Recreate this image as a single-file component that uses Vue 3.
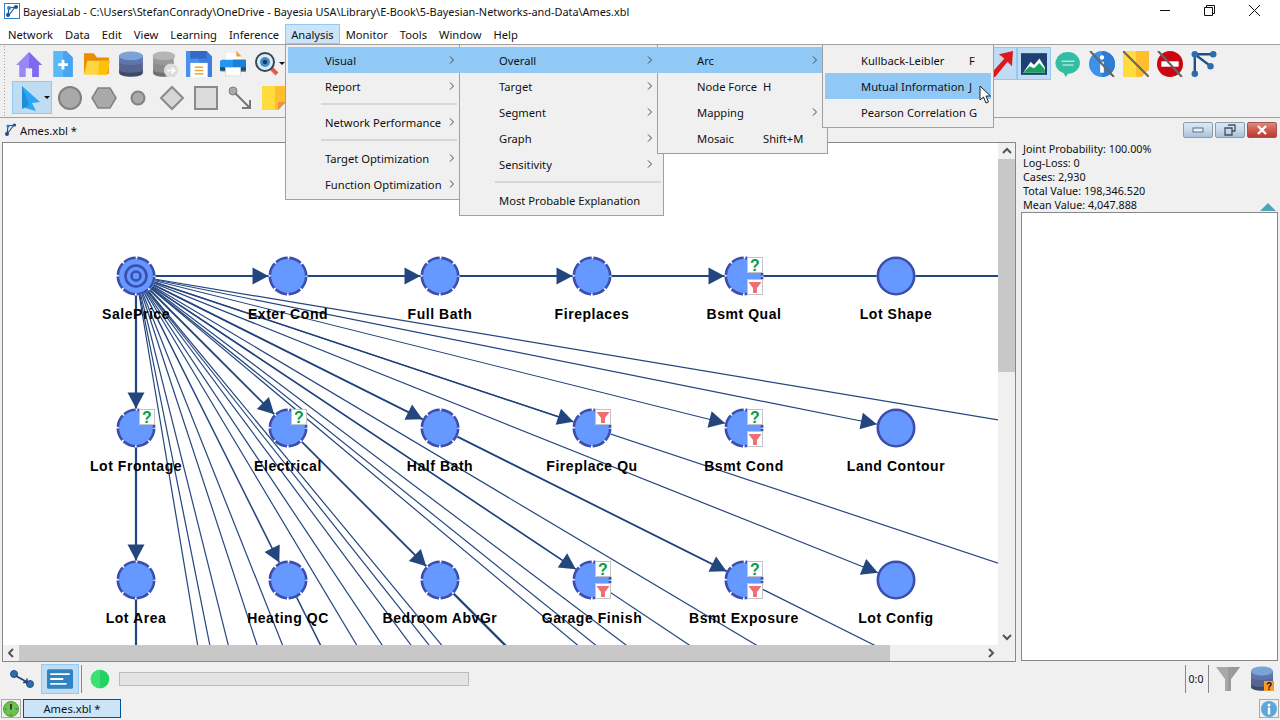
<template>
  <div class="app">
    <!-- title bar -->
    <header class="titlebar">
      <svg class="logo" width="16" height="16" viewBox="0 0 16 16">
        <rect x="0.5" y="0.5" width="15" height="15" fill="#fff" stroke="#2f7fd6" />
        <path d="M4 12 L5 5 M5 5 L11 4 M5 12 L11 4" stroke="#1e4f8a" stroke-width="1.2" fill="none" />
        <circle cx="4" cy="12" r="2" fill="#1e4f8a" />
        <circle cx="5" cy="5" r="2" fill="#2f7fd6" />
        <circle cx="12" cy="4" r="2" fill="#1e4f8a" />
      </svg>
      <span class="title-text">BayesiaLab - C:\Users\StefanConrady\OneDrive - Bayesia USA\Library\E-Book\5-Bayesian-Networks-and-Data\Ames.xbl</span>
      <div class="winctl">
        <svg width="44" height="22" viewBox="0 0 44 22"><path d="M17 10.5 H27" stroke="#111" /></svg>
        <svg width="44" height="22" viewBox="0 0 44 22"><path d="M17.5 7.5 H25.5 V15.5 H17.5 Z M19.5 7.5 V5.5 H27.5 V13.5 H25.5" stroke="#111" fill="none" /></svg>
        <svg width="46" height="22" viewBox="0 0 46 22"><path d="M18 5 L29 16 M29 5 L18 16" stroke="#111" fill="none" /></svg>
      </div>
    </header>

    <!-- menu bar -->
    <nav class="menubar">
      <span v-for="m in menuBar" :key="m" class="menubar-item" :class="{ active: m === 'Analysis' }">{{ m }}</span>
    </nav>

    <!-- toolbars -->
    <section class="toolbars">
      <div class="tool-row">
        <span class="tool"><svg width="26" height="26" viewBox="0 0 24 24"><path d="M12 1 L24 13 H21 V24 H15 V16 H9 V24 H3 V13 H0 Z" fill="#9a86f8" /><path d="M12 1 L24 13 H21 V24 H15 V16 H12 Z" fill="#7d6af0" /></svg></span>
        <span class="tool"><svg width="26" height="26" viewBox="0 0 24 24"><path d="M3 0 H15 L21 6 V24 H3 Z" fill="#5cb9f7" /><path d="M12 0 H15 L21 6 V24 H12 Z" fill="#4aa3ef" /><path d="M12 8 V17 M7.500 12.500 H16.500" stroke="#fff" stroke-width="2.600" /></svg></span>
        <span class="tool"><svg width="26" height="26" viewBox="0 0 24 24"><path d="M0 2 H9 L12 6 H23 V21 H0 Z" fill="#e98e04" /><path d="M3 9 H24 L21 22 H0 Z" fill="#ffd640" /><path d="M14 9 H24 L21 22 H13 Z" fill="#ffc107" /></svg></span>
        <span class="tool"><svg width="26" height="26" viewBox="0 0 24 24"><path d="M1 17 V20 C1 25 23 25 23 20 V17 Z" fill="#3f4a6b" /><path d="M1 10 V17 C1 21 23 21 23 17 V10 Z" fill="#56658f" /><path d="M1 4 V10 C1 14 23 14 23 10 V4 Z" fill="#5f76ad" /><ellipse cx="12" cy="4.500" rx="11" ry="4" fill="#7ba3d6" /></svg></span>
        <span class="tool"><svg width="26" height="26" viewBox="0 0 24 24"><path d="M1 17 V20 C1 25 20 25 20 20 V17 Z" fill="#6f6f6f" /><path d="M1 10 V17 C1 21 20 21 20 17 V10 Z" fill="#8c8c8c" /><path d="M1 4 V10 C1 14 20 14 20 10 V4 Z" fill="#999" /><ellipse cx="11" cy="4.500" rx="10.500" ry="4" fill="#b5b5b5" /><circle cx="17.500" cy="18" r="6.500" fill="#dcdcdc" /><path d="M14 18 H20 M18 15.500 L21 18 L18 20.500" stroke="#fff" stroke-width="1.600" fill="none" /></svg></span>
        <span class="tool"><svg width="26" height="26" viewBox="0 0 24 24"><path d="M0 0 H19 L24 5 V24 H0 Z" fill="#4a90f0" /><path d="M12 0 H19 L24 5 V24 H12 Z" fill="#3f7fe0" /><rect x="4" y="0" width="15" height="7" fill="#3567c4" /><rect x="4" y="11" width="16" height="13" fill="#fff" /><path d="M8 15 H16 M8 18 H16 M8 21 H16" stroke="#f5a623" stroke-width="1.500" /></svg></span>
        <span class="tool"><svg width="26" height="26" viewBox="0 0 24 24"><path d="M5 1 H16 L20 5 V10 H5 Z" fill="#fff" stroke="#ddd" stroke-width="0.500" /><path d="M15 0 L20 5 H15 Z" fill="#f0a030" /><rect x="0" y="8" width="24" height="11" rx="2" fill="#2196f3" /><rect x="12" y="8" width="12" height="11" fill="#1a7fd6" /><rect x="0" y="15" width="24" height="3" fill="#33475b" /><rect x="5" y="15" width="14" height="8" fill="#fff" stroke="#ccc" stroke-width="0.500" /></svg></span>
        <span class="tool tool-drop"><svg width="24" height="26" viewBox="0 0 24 24"><path d="M15 15 L22 22" stroke="#e8584f" stroke-width="4" /><circle cx="10" cy="10" r="9" fill="#dfe9ef" stroke="#33475b" stroke-width="2" /><circle cx="10" cy="10" r="5" fill="#3f8fd0" /><circle cx="10" cy="10" r="2.200" fill="#1f3a57" /></svg><i class="caret"></i></span>
        <span class="tool-gap"></span>
        <span class="tool tool-on tool-narrow"><svg width="26" height="26" viewBox="0 0 24 24"><path d="M1 24 L16 7 L11 3 L24 0 L23 14 L19 10 L5 27 Z" fill="#e0181c" /></svg></span>
        <span class="tool tool-on"><svg width="26" height="26" viewBox="0 0 24 24"><rect x="0" y="2" width="24" height="20" fill="#1d3f74" /><path d="M2 20 L9 10 L12 13 L17 7 L22 15 V20 Z" fill="#fff" /><path d="M2 20 L8 14 L12 16 L17 11 L22 17 V20 Z" fill="#18a25f" /></svg></span>
        <span class="tool"><svg width="26" height="26" viewBox="0 0 24 24"><path d="M12 1 A11 10 0 1 1 12 21 L10 24 L8 20.500 A11 10 0 0 1 12 1 Z" fill="#33bda2" /><path d="M6 9.500 H18 M7 13 H17" stroke="#a8e6d8" stroke-width="1.400" /></svg></span>
        <span class="tool"><svg width="26" height="26" viewBox="0 0 24 24"><circle cx="12" cy="12" r="12" fill="#3a92ec" /><path d="M12 0 A12 12 0 0 1 12 24 Z" fill="#2f7cd0" /><circle cx="12" cy="6" r="2" fill="#fff" /><rect x="10.300" y="10" width="3.400" height="10" fill="#fff" /><path d="M1 0 L23 24" stroke="#666" stroke-width="2" /></svg></span>
        <span class="tool"><svg width="26" height="26" viewBox="0 0 24 24"><path d="M0 0 H24 V17 L17 24 H0 Z" fill="#ffdb3d" /><path d="M12 0 H24 V17 L17 24 H12 Z" fill="#ffbe2e" /><path d="M0 0 L24 24" stroke="#666" stroke-width="2" /></svg></span>
        <span class="tool"><svg width="26" height="26" viewBox="0 0 24 24"><circle cx="12" cy="12" r="12" fill="#c90612" /><rect x="4" y="9.500" width="16" height="5" fill="#fff" /><path d="M1 0 L23 24" stroke="#666" stroke-width="2" /></svg></span>
        <span class="tool"><svg width="26" height="26" viewBox="0 0 24 24"><path d="M3.500 3 V21 M3.500 3 H20.500 M3.500 3 L18 14" stroke="#1f4e86" stroke-width="2.200" fill="none" /><circle cx="3.500" cy="3" r="3" fill="#2f6cae" /><circle cx="3.500" cy="21" r="3" fill="#2f6cae" /><circle cx="20.500" cy="3" r="3" fill="#2f6cae" /><circle cx="18" cy="14" r="3" fill="#2f6cae" /></svg></span>
      </div>
      <div class="tool-row">
        <span class="tool tool-on tool-wide"><svg width="22" height="26" viewBox="0 0 22 26"><path d="M3 1 L21 17 L13 18 L17 26 L3 22 Z" fill="#2aa6f2" /><path d="M3 1 L10 20 L3 24 Z" fill="#1c8edb" /></svg><i class="caret"></i></span>
        <span class="tool"><svg width="26" height="26" viewBox="0 0 26 26"><circle cx="13" cy="13" r="11" fill="#a9a9a9" stroke="#808080" stroke-width="2" /></svg></span>
        <span class="tool"><svg width="26" height="26" viewBox="0 0 26 26"><path d="M7 3 H19 L25 13 L19 23 H7 L1 13 Z" fill="#a9a9a9" stroke="#808080" stroke-width="1.500" /></svg></span>
        <span class="tool"><svg width="26" height="26" viewBox="0 0 26 26"><circle cx="13" cy="13" r="6.500" fill="#a9a9a9" stroke="#808080" stroke-width="2" /></svg></span>
        <span class="tool"><svg width="26" height="26" viewBox="0 0 26 26"><path d="M13 2 L24 13 L13 24 L2 13 Z" fill="#d6d6d6" stroke="#8a8a8a" stroke-width="2" /></svg></span>
        <span class="tool"><svg width="26" height="26" viewBox="0 0 26 26"><rect x="2" y="2" width="22" height="22" fill="#dcdcdc" stroke="#8a8a8a" stroke-width="2" /></svg></span>
        <span class="tool"><svg width="26" height="26" viewBox="0 0 26 26"><circle cx="6" cy="6" r="4" fill="#a9a9a9" stroke="#808080" /><path d="M8 8 L23 23 M23 15 V23 H15" stroke="#777" stroke-width="2" fill="none" /></svg></span>
        <span class="tool"><svg width="24" height="26" viewBox="0 0 24 24"><path d="M0 0 H24 V16 L16 24 H0 Z" fill="#ffdb3d" /><path d="M13 0 H24 V16 L16 24 H13 Z" fill="#ffbe2e" /><path d="M24 16 L16 24 V16 Z" fill="#e9963a" /></svg></span>
      </div>
    </section>

    <!-- document tab line -->
    <div class="docline">
      <svg width="13" height="14" viewBox="0 0 13 14">
        <path d="M3 11 L4 3 M4 3 L10 2 M3 11 L10 2" stroke="#1e4f8a" stroke-width="1.200" fill="none" />
        <circle cx="3" cy="11" r="2" fill="#1e4f8a" />
        <circle cx="4" cy="3" r="1.600" fill="#2f7fd6" />
        <circle cx="10.500" cy="2" r="1.600" fill="#1e4f8a" />
      </svg>
      <span class="doc-name">Ames.xbl *</span>
      <div class="doc-btns">
        <span class="doc-btn"><svg width="14" height="8" viewBox="0 0 14 8"><rect x="2" y="2" width="10" height="4" fill="#e8eef5" stroke="#5f6f80" /></svg></span>
        <span class="doc-btn"><svg width="14" height="12" viewBox="0 0 14 12"><path d="M5 1 H12 V7 H9 M2 4 H9 V11 H2 Z" fill="none" stroke="#44505e" stroke-width="1.300" /></svg></span>
        <span class="doc-btn doc-close"><svg width="14" height="12" viewBox="0 0 14 12"><path d="M3 2 L11 10 M11 2 L3 10" stroke="#fff" stroke-width="2.400" /></svg></span>
      </div>
    </div>

    <!-- work area -->
    <main class="work">
      <div class="canvas-frame">
        <div class="canvas-top">
          <svg class="graph" width="995" height="502" viewBox="3 143 995 502">
            <line v-for="(e, i) in edges" :key="'e' + i" :x1="e.x1" :y1="e.y1" :x2="e.x2" :y2="e.y2" :stroke-width="e.w" stroke="#24467f" />
            <polygon v-for="(a, i) in arrows" :key="'a' + i" :points="a" fill="#24467f" />
            <g v-for="n in nodes" :key="n.name">
              <circle :cx="n.x" :cy="n.y" r="19.500" fill="#fff" />
              <circle :cx="n.x" :cy="n.y" r="17.500" fill="#6699ff" />
              <circle :cx="n.x" :cy="n.y" r="18.200" fill="none" stroke="#3b4eae" stroke-width="2.600"
                :stroke-dasharray="n.solid ? null : '12.590 1.700'" stroke-dashoffset="-0.850" />
              <template v-if="n.target">
                <circle :cx="n.x" :cy="n.y" r="10.500" fill="none" stroke="#3b4eae" stroke-width="2.600" />
                <circle :cx="n.x" :cy="n.y" r="4.500" fill="none" stroke="#3b4eae" stroke-width="2.600" />
              </template>
              <g v-for="b in n.badges" :key="b.kind">
                <rect :x="n.x + 3.500" :y="n.y + b.dy + 0.500" width="15" height="15" fill="#fff" stroke="#c4c4c4" />
                <text v-if="b.kind === 'q'" class="qmark" :x="n.x + 11" :y="n.y + b.dy + 14">?</text>
                <template v-else>
                  <path :d="funnel(n.x + 4.500, n.y + b.dy + 3)" fill="#ec7074" />
                </template>
              </g>
              <text class="node-label" :x="n.x" :y="n.y + 43">{{ n.name }}</text>
            </g>
          </svg>
          <div class="vscroll">
            <svg width="16" height="16" viewBox="0 0 16 16"><path d="M4 10 L8 6 L12 10" stroke="#555" stroke-width="2" fill="none" /></svg>
            <div class="vthumb"></div>
            <div class="fill"></div>
            <svg width="16" height="16" viewBox="0 0 16 16"><path d="M4 6 L8 10 L12 6" stroke="#555" stroke-width="2" fill="none" /></svg>
          </div>
        </div>
        <div class="hscroll">
          <svg width="16" height="16" viewBox="0 0 16 16"><path d="M10 4 L6 8 L10 12" stroke="#555" stroke-width="2" fill="none" /></svg>
          <div class="hthumb"></div>
          <div class="fill"></div>
          <svg width="16" height="16" viewBox="0 0 16 16"><path d="M6 4 L10 8 L6 12" stroke="#555" stroke-width="2" fill="none" /></svg>
          <span class="corner"></span>
        </div>
      </div>
      <aside class="side">
        <div class="stats">
          <div v-for="s in stats" :key="s">{{ s }}</div>
          <i class="collapse"></i>
        </div>
        <div class="side-box"></div>
      </aside>
    </main>

    <!-- status row -->
    <div class="statusbar">
      <span class="st-btn"><svg width="26" height="22" viewBox="0 0 26 22"><circle cx="5" cy="6" r="3.500" fill="#2f6cae" stroke="#1f4e86" /><circle cx="21" cy="16" r="3.500" fill="#2f6cae" stroke="#1f4e86" /><path d="M7 8 L18 14 M18 10.500 V14.500 H14" stroke="#1f3f6e" stroke-width="1.500" fill="none" /></svg></span>
      <span class="st-btn st-on"><svg width="26" height="20" viewBox="0 0 24 18"><rect width="24" height="18" rx="1.500" fill="#2f85c4" /><path d="M3 4.500 H21 M3 9 H15 M3 13.500 H18" stroke="#fff" stroke-width="1.800" /></svg></span>
      <span class="st-sep"></span>
      <svg class="led" width="20" height="20" viewBox="0 0 20 20"><circle cx="10" cy="10" r="9.300" fill="#22d45f" /><path d="M10 .700 A9.300 9.300 0 0 0 10 19.300 Z" fill="#3ae274" /></svg>
      <div class="progress"></div>
      <span class="st-sep st-sep-a"></span>
      <span class="ratio">0:0</span>
      <span class="st-sep"></span>
      <svg class="st-funnel" width="26" height="26" viewBox="0 0 26 26"><path d="M1 1 H25 L16 13 V25 H10 V13 Z" fill="#a8a8a8" /><path d="M13 1 H25 L16 13 V25 H13 Z" fill="#9a9a9a" /></svg>
      <svg class="st-db" width="24" height="26" viewBox="0 0 24 26"><path d="M1 18 V21 C1 26 23 26 23 21 V18 Z" fill="#3f4a6b" /><path d="M1 11 V18 C1 22 23 22 23 18 V11 Z" fill="#56658f" /><path d="M1 5 V11 C1 15 23 15 23 11 V5 Z" fill="#5f76ad" /><ellipse cx="12" cy="5" rx="11" ry="4.500" fill="#7ba3d6" /><rect x="14" y="15" width="10" height="10" fill="#f79b2e" /><text class="db-q" x="19" y="24">?</text></svg>
    </div>

    <!-- task row -->
    <div class="taskbar">
      <span class="task-btn"><svg width="16" height="16" viewBox="0 0 16 16"><circle cx="8" cy="8" r="7.500" fill="#6cc24a" stroke="#4f9a35" /><path d="M8 3 V8.500" stroke="#222" stroke-width="1.600" /><path d="M8 13 V14.500 M2 8 H3.500 M12.500 8 H14" stroke="#2f6a1c" /></svg></span>
      <span class="task-tab">Ames.xbl *</span>
      <span class="task-btn task-info"><svg width="16" height="16" viewBox="0 0 16 16"><circle cx="8" cy="8" r="8" fill="#5ca5dd" /><circle cx="8" cy="4" r="1.500" fill="#fff" /><rect x="6.800" y="6.500" width="2.400" height="7" fill="#fff" /></svg></span>
    </div>

    <!-- open cascade of menus -->
    <div v-for="(menu, i) in menus" :key="i" class="menu" :class="menu.cls">
      <template v-for="(row, j) in menu.rows" :key="j">
        <div v-if="row === '-'" class="menu-sep"><span></span></div>
        <div v-else class="menu-row" :class="{ open: row.open, hot: row.hot }">
          <span class="menu-label">{{ row.t }}</span>
          <span v-if="row.k" class="menu-key">{{ row.k }}</span>
          <svg v-if="row.sub" class="menu-arrow" width="6" height="8" viewBox="0 0 6 8"><path d="M1 .500 L4.500 4 L1 7.500" stroke="#444" fill="none" /></svg>
        </div>
      </template>
    </div>

    <svg class="pointer" width="13" height="20" viewBox="0 0 13 20"><path d="M1 1 V15 L4.500 12 L7 18 L9.500 17 L7 11 H11.500 Z" fill="#fff" stroke="#222" /></svg>
  </div>
</template>

<script setup>
const menuBar = ['Network', 'Data', 'Edit', 'View', 'Learning', 'Inference', 'Analysis', 'Monitor', 'Tools', 'Window', 'Help']

const stats = [
  'Joint Probability: 100.00%',
  'Log-Loss: 0',
  'Cases: 2,930',
  'Total Value: 198,346.520',
  'Mean Value: 4,047.888',
]

const menus = [
  {
    cls: 'm1',
    rows: [
      { t: 'Visual', sub: true, open: true },
      { t: 'Report', sub: true },
      '-',
      { t: 'Network Performance', sub: true },
      '-',
      { t: 'Target Optimization', sub: true },
      { t: 'Function Optimization', sub: true },
    ],
  },
  {
    cls: 'm2',
    rows: [
      { t: 'Overall', sub: true, open: true },
      { t: 'Target', sub: true },
      { t: 'Segment', sub: true },
      { t: 'Graph', sub: true },
      { t: 'Sensitivity', sub: true },
      '-',
      { t: 'Most Probable Explanation' },
    ],
  },
  {
    cls: 'm3',
    rows: [
      { t: 'Arc', sub: true, open: true },
      { t: 'Node Force', k: 'H' },
      { t: 'Mapping', sub: true },
      { t: 'Mosaic', k: 'Shift+M' },
    ],
  },
  {
    cls: 'm4',
    rows: [
      { t: 'Kullback-Leibler', k: 'F' },
      { t: 'Mutual Information', k: 'J', hot: true },
      { t: 'Pearson Correlation', k: 'G' },
    ],
  },
]

const Q = { kind: 'q', dy: -19 }
const F = { kind: 'f', dy: 3 }
const FT = { kind: 'f', dy: -19 }

// col, row on the graph's grid
const grid = [
  ['SalePrice', 0, 0, { target: true }],
  ['Exter Cond', 1, 0],
  ['Full Bath', 2, 0],
  ['Fireplaces', 3, 0],
  ['Bsmt Qual', 4, 0, { badges: [Q, F] }],
  ['Lot Shape', 5, 0, { solid: true, noArrow: true }],
  ['Lot Frontage', 0, 1, { badges: [Q] }],
  ['Electrical', 1, 1, { badges: [Q] }],
  ['Half Bath', 2, 1],
  ['Fireplace Qu', 3, 1, { badges: [FT] }],
  ['Bsmt Cond', 4, 1, { badges: [Q, F] }],
  ['Land Contour', 5, 1, { solid: true }],
  ['Lot Area', 0, 2],
  ['Heating QC', 1, 2],
  ['Bedroom AbvGr', 2, 2],
  ['Garage Finish', 3, 2, { badges: [Q, F] }],
  ['Bsmt Exposure', 4, 2, { badges: [Q, F] }],
  ['Lot Config', 5, 2, { solid: true }],
]

const nodes = grid.map(([name, c, r, opts]) => ({
  name,
  x: 136 + c * 152,
  y: 276 + r * 152,
  badges: [],
  ...opts,
}))

const S = { x: 136, y: 276 }
const FAR = 1400

function ray(dx, dy, w) {
  return { x1: S.x, y1: S.y, x2: S.x + dx * FAR, y2: S.y + dy * FAR, w }
}

// from SalePrice out to a point on the grid (col, row)
function to(c, r, w) {
  return { x1: S.x, y1: S.y, x2: 136 + c * 152, y2: 276 + r * 152, w }
}

const edges = [
  // thin arcs leaving the canvas, by slope
  ray(1, 0, 2),
  ...[0.167, 0.333, 0.5, 0.595, 0.667, 0.753, 0.803, 0.836].map((m) => ray(1, m, 1.2)),
  ...[0.167, 0.2, 0.25, 0.328, 0.397, 0.598, 0.667, 0.745, 0.794, 0.828].map((r) => ray(r, 1, 1.2)),
  ray(0.5, 1, 1.5),
  ray(0, 1, 2.2),
  // thin arcs that stop at their node
  to(5, 1, 1.2),
  to(4, 1, 1.2),
  to(5, 2, 1.2),
  // heavier arcs
  to(4, 0, 2.2),
  to(3, 1, 1.5),
  to(4, 2, 1.7),
  to(3, 2, 1.5),
  to(2, 2, 1.8),
  { x1: 440, y1: 580, x2: 520, y2: 660, w: 2.4 },
]

function arrow(t) {
  const dx = t.x - S.x
  const dy = t.y - S.y
  const len = Math.hypot(dx, dy)
  const ux = dx / len
  const uy = dy / len
  const tipX = t.x - ux * 19.5
  const tipY = t.y - uy * 19.5
  const bx = tipX - ux * 16
  const by = tipY - uy * 16
  return [
    [tipX, tipY],
    [bx - uy * 8.5, by + ux * 8.5],
    [bx + uy * 8.5, by - ux * 8.5],
  ].map((p) => p.join(',')).join(' ')
}

const arrows = nodes.filter((n) => n.name !== 'SalePrice' && !n.noArrow).map(arrow)

function funnel(x, y) {
  return `M${x} ${y} H${x + 13} L${x + 8.5} ${y + 6} V${y + 11} H${x + 4.5} V${y + 6} Z`
}
</script>

<style scoped>
.app {
  position: relative;
  width: 1280px;
  height: 720px;
  overflow: hidden;
  display: flex;
  flex-direction: column;
  background: #f0f0f0;
  font-family: 'Noto Sans', 'Liberation Sans', sans-serif;
  font-size: 11.2px;
  color: #111;
}

.titlebar {
  height: 22px;
  background: #fff;
  display: flex;
  align-items: center;
  padding-left: 4px;
}

.logo {
  margin-right: 3px;
}

.title-text {
  font-size: 10.9px;
  white-space: nowrap;
}

.winctl {
  margin-left: auto;
  margin-right: 3px;
  display: flex;
  align-items: center;
}

.menubar {
  height: 22px;
  background: #fff;
  display: flex;
  align-items: flex-end;
  padding-left: 2px;
}

.menubar-item {
  height: 18px;
  line-height: 19px;
  padding: 0 5px;
  border: 1px solid transparent;
  box-sizing: content-box;
}

.menubar-item.active {
  background: #cce4f7;
  border-color: #90c8f6;
}

.toolbars {
  height: 74px;
  box-sizing: border-box;
  border-top: 1px solid #a0a0a0;
  border-bottom: 1px solid #a0a0a0;
  padding: 2px 0 0 12px;
  display: flex;
  flex-direction: column;
  gap: 1px;
  background-image: radial-gradient(#a8a8a8 0.6px, transparent 0.8px);
  background-size: 3px 3px;
  background-position: 3px 0;
  background-repeat: repeat-y;
}

.tool-row {
  display: flex;
  height: 33px;
}

.tool {
  width: 34px;
  height: 33px;
  display: flex;
  align-items: center;
  justify-content: center;
  position: relative;
  flex: none;
}

.tool-wide {
  width: 40px;
  margin-right: 1px;
  padding-right: 4px;
  box-sizing: border-box;
}

.tool-on {
  background: #c0dcf3;
  outline: 1px solid #90c8f6;
  outline-offset: -1px;
}

.tool-narrow {
  overflow: hidden;
}

.tool-gap {
  flex: none;
  width: 699px;
}

.caret {
  position: absolute;
  right: 2px;
  top: 15px;
  border-left: 3px solid transparent;
  border-right: 3px solid transparent;
  border-top: 3px solid #111;
}

.tool-drop .caret {
  right: -1px;
}

.docline {
  height: 24px;
  display: flex;
  align-items: center;
  padding-left: 4px;
  gap: 3px;
}

.doc-btns {
  margin-left: auto;
  margin-right: 3px;
  display: flex;
  gap: 2px;
}

.doc-btn {
  width: 30px;
  height: 16px;
  display: flex;
  align-items: center;
  justify-content: center;
  border: 1px solid #8b9db2;
  border-radius: 2px;
  box-sizing: border-box;
  background: linear-gradient(#dbe7f3, #c9d9ea 50%, #a9c0d8);
}

.doc-close {
  border-color: #a0564e;
  background: linear-gradient(#e08a7e, #cf5a4e 50%, #b53c32);
}

.work {
  height: 520px;
  display: flex;
  padding-left: 2px;
}

.canvas-frame {
  width: 1014px;
  height: 520px;
  box-sizing: border-box;
  border: 1px solid #888;
  display: flex;
  flex-direction: column;
  background: #fff;
}

.canvas-top {
  flex: 1;
  min-height: 0;
  display: flex;
}

.graph {
  display: block;
  flex: none;
  background: #fff;
}

.qmark {
  font-family: 'Liberation Sans', sans-serif;
  font-weight: 700;
  font-size: 16px;
  fill: #0a9b3f;
  text-anchor: middle;
}

.db-q {
  font-family: 'Liberation Sans', sans-serif;
  font-weight: 700;
  font-size: 10px;
  fill: #111;
  text-anchor: middle;
}

.node-label {
  font-family: 'Liberation Sans', sans-serif;
  font-weight: 700;
  font-size: 14px;
  letter-spacing: 0.55px;
  fill: #000;
  text-anchor: middle;
}

.vscroll {
  flex: 1;
  background: #f0f0f0;
  display: flex;
  flex-direction: column;
  align-items: center;
}

.vthumb {
  width: 100%;
  height: 213px;
  background: #c8c8c8;
  flex: none;
}

.fill {
  flex: 1;
}

.hscroll {
  height: 16px;
  flex: none;
  background: #f0f0f0;
  display: flex;
  align-items: center;
}

.hthumb {
  width: 871px;
  height: 100%;
  background: #c8c8c8;
  flex: none;
}

.corner {
  width: 16px;
  height: 100%;
  flex: none;
}

.side {
  width: 257px;
  margin-left: 5px;
  display: flex;
  flex-direction: column;
}

.stats {
  position: relative;
  height: 70px;
  padding: 0 0 0 2px;
  font-size: 10.8px;
  line-height: 14px;
  box-sizing: border-box;
}

.collapse {
  position: absolute;
  right: 2px;
  bottom: 1px;
  border-left: 8px solid transparent;
  border-right: 8px solid transparent;
  border-bottom: 8px solid #4fa4b8;
}

.side-box {
  flex: 1;
  background: #fff;
  border: 1px solid #888;
  margin-bottom: 1px;
}

.statusbar {
  height: 34px;
  display: flex;
  align-items: center;
  padding-left: 8px;
}

.st-btn {
  width: 28px;
  height: 30px;
  display: flex;
  align-items: center;
  justify-content: center;
  flex: none;
}

.st-on {
  width: 38px;
  margin-left: 5px;
  background: #c0dcf3;
  outline: 1px solid #90c8f6;
  outline-offset: -1px;
}

.st-sep {
  width: 1px;
  height: 28px;
  background: #888;
  margin-left: 2px;
  flex: none;
}

.led {
  margin-left: 8px;
  flex: none;
}

.progress {
  width: 350px;
  height: 14px;
  box-sizing: border-box;
  margin-left: 9px;
  background: #e4e4e4;
  border: 1px solid #bbb;
  flex: none;
}

.st-sep-a {
  margin-left: auto;
}

.ratio {
  width: 20px;
  text-align: center;
  font-size: 10.5px;
}

.st-funnel {
  margin-left: 6px;
}

.st-db {
  margin-left: 9px;
  margin-right: 6px;
}

.taskbar {
  height: 24px;
  box-sizing: border-box;
  display: flex;
  align-items: flex-start;
  padding: 3px 1px 0;
  gap: 2px;
}

.task-btn {
  width: 20px;
  height: 19px;
  border: 1px solid #aaa;
  box-sizing: border-box;
  display: flex;
  align-items: center;
  justify-content: center;
}

.task-tab {
  width: 98px;
  height: 19px;
  line-height: 17px;
  box-sizing: border-box;
  border: 1px solid #005499;
  background: #cce4f7;
  text-align: center;
}

.task-info {
  margin-left: auto;
}

.menu {
  position: absolute;
  top: 44px;
  box-sizing: border-box;
  border: 1px solid #a0a0a0;
  background: #f0f0f0;
  padding: 2px;
}

.m1 { left: 285px; width: 175px; z-index: 1; }
.m2 { left: 459px; width: 205px; z-index: 2; }
.m3 { left: 657px; width: 171px; z-index: 3; }
.m4 { left: 822px; width: 172px; z-index: 4; }

.menu-row {
  position: relative;
  height: 26px;
  line-height: 27px;
  padding-left: 37px;
  white-space: nowrap;
}

.m4 .menu-row {
  padding-left: 36px;
}

.menu-row.open {
  background: #90c8f6;
  margin-right: -3px;
}

.m2 .menu-row.open,
.m3 .menu-row.open {
  margin-left: -3px;
  padding-left: 40px;
}

.menu-row.hot {
  background: #90c8f6;
}

.menu-key {
  position: absolute;
  top: 0;
}

.m3 .menu-key { left: 103px; }
.m4 .menu-key { left: 144px; }

.menu-arrow {
  position: absolute;
  top: 9px;
}

.m1 .menu-arrow { right: 2px; }
.m2 .menu-arrow { right: 8px; }
.m3 .menu-arrow { right: 7px; }
.m1 .menu-row.open .menu-arrow { right: 5px; }
.m2 .menu-row.open .menu-arrow { right: 11px; }
.m3 .menu-row.open .menu-arrow { right: 10px; }

.menu-sep {
  height: 10px;
  padding-left: 33px;
  display: flex;
  align-items: center;
}

.menu-sep span {
  flex: 1;
  height: 2px;
  background: #d7d7d7;
}

.pointer {
  position: absolute;
  left: 979px;
  top: 85px;
  z-index: 5;
}
</style>

<style>
html,
body {
  margin: 0;
  background: #f0f0f0;
}
</style>
